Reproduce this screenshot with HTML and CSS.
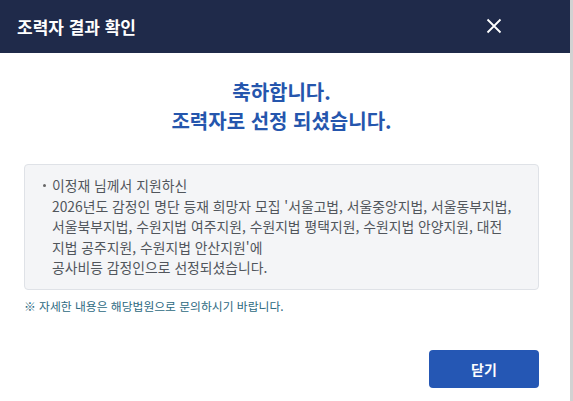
FILE: index.html
```html
<!DOCTYPE html>
<html lang="ko">
<head>
<meta charset="utf-8">
<link rel="stylesheet" href="styles.css">
</head>
<body>
<div class="page">
  <div class="modal">
    <div class="modal-header">
      <h1 class="modal-title">조력자 결과 확인</h1>
      <button class="close-btn" aria-label="닫기">
        <svg width="16" height="16" viewBox="0 0 16 16"><path d="M1.5 1.5 L14.5 14.5 M14.5 1.5 L1.5 14.5" stroke="#ffffff" stroke-width="1.8" fill="none"/></svg>
      </button>
    </div>
    <div class="modal-body">
      <div class="congrats">
        <p>축하합니다.</p>
        <p>조력자로 선정 되셨습니다.</p>
      </div>
      <div class="info-box">
        <div class="info-item">
          <span class="bullet"></span>
          <p class="info-text">이정재 님께서 지원하신<br>2026년도 감정인 명단 등재 희망자 모집 '서울고법, 서울중앙지법, 서울동부지법,<br>서울북부지법, 수원지법 여주지원, 수원지법 평택지원, 수원지법 안양지원, 대전<br>지법 공주지원, 수원지법 안산지원'에<br>공사비등 감정인으로 선정되셨습니다.</p>
        </div>
      </div>
      <p class="note">※ 자세한 내용은 해당법원으로 문의하시기 바랍니다.</p>
      <div class="footer">
        <button class="primary-btn">닫기</button>
      </div>
    </div>
  </div>
  <div class="side-strip"></div>
</div>
</body>
</html>
```
FILE: styles.css
```css
html, body {
  margin: 0;
  padding: 0;
  background: #ffffff;
}
body {
  font-family: "Noto Sans CJK KR", "Noto Sans", sans-serif;
  width: 573px;
  height: 401px;
  overflow: hidden;
}
.page {
  display: flex;
  width: 573px;
  height: 401px;
}
.modal {
  width: 570px;
  height: 401px;
  background: #ffffff;
  display: flex;
  flex-direction: column;
}
.side-strip {
  width: 3px;
  background: #d2d2d2;
}
.modal-header {
  height: 53px;
  background: #1f2a4a;
  display: flex;
  align-items: center;
  justify-content: space-between;
  padding: 0 68px 0 17px;
}
.modal-title {
  margin: 0;
  color: #ffffff;
  font-size: 17px;
  font-weight: 700;
  line-height: 20px;
  letter-spacing: 0;
}
.close-btn {
  background: none;
  border: 0;
  padding: 0;
  width: 16px;
  height: 16px;
  display: flex;
  margin-top: -2px;
}
.modal-body {
  padding: 24px 31px 0 24px;
}
.congrats {
  text-align: center;
  color: #2556ad;
  font-size: 20px;
  font-weight: 700;
  line-height: 29px;
}
.congrats p {
  margin: 0;
}
.info-box {
  margin-top: 29px;
  background: #f4f5f7;
  border: 1px solid #dfe2e7;
  border-radius: 4px;
  padding: 10px 12px 11px 17px;
}
.info-item {
  display: flex;
}
.bullet {
  width: 10px;
  flex: none;
  position: relative;
}
.bullet::before {
  content: "";
  position: absolute;
  left: 1px;
  top: 9px;
  width: 3px;
  height: 3px;
  border-radius: 50%;
  background: #666666;
}
.info-text {
  margin: 0;
  color: #51565c;
  font-size: 13.85px;
  line-height: 20.5px;
  white-space: nowrap;
}
.note {
  margin: 8px 0 0;
  color: #2d6a82;
  font-size: 11.8px;
  line-height: 16px;
}
.footer {
  display: flex;
  justify-content: flex-end;
  margin-top: 36px;
}
.primary-btn {
  width: 110px;
  height: 38px;
  background: #2557b4;
  color: #ffffff;
  border: 0;
  border-radius: 4px;
  font-family: "Noto Sans CJK KR", "Noto Sans", sans-serif;
  font-size: 14px;
  font-weight: 700;
}
```
